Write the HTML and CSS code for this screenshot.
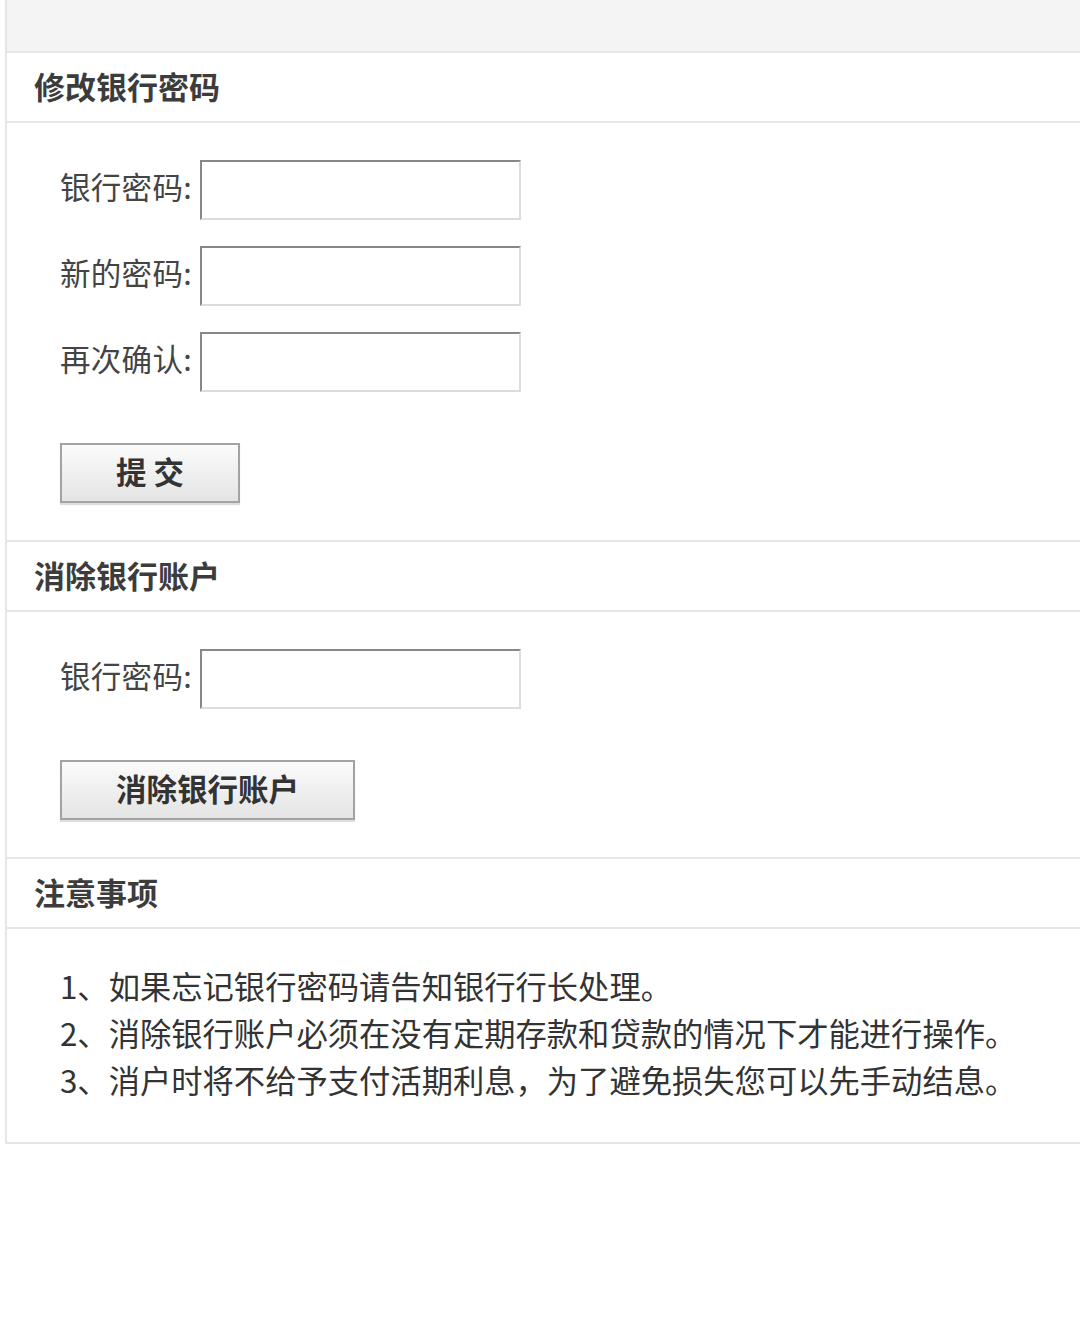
FILE: index.html
```html
<!DOCTYPE html>
<html lang="zh-CN">
<head>
<meta charset="utf-8">
<title>银行密码</title>
<link rel="stylesheet" href="styles.css">
</head>
<body>
<div class="panel">
  <div class="topband"></div>

  <div class="sec-head">修改银行密码</div>
  <div class="sec-body">
    <div class="row"><span class="lbl">银行密码:</span><input class="inp" type="password"></div>
    <div class="row"><span class="lbl">新的密码:</span><input class="inp" type="password"></div>
    <div class="row"><span class="lbl">再次确认:</span><input class="inp" type="password"></div>
    <div class="btn-row"><button class="btn">提 交</button></div>
  </div>

  <div class="sec-head">消除银行账户</div>
  <div class="sec-body">
    <div class="row"><span class="lbl">银行密码:</span><input class="inp" type="password"></div>
    <div class="btn-row"><button class="btn">消除银行账户</button></div>
  </div>

  <div class="sec-head">注意事项</div>
  <div class="sec-body notes">
    <div class="note">1、如果忘记银行密码请告知银行行长处理。</div>
    <div class="note">2、消除银行账户必须在没有定期存款和贷款的情况下才能进行操作。</div>
    <div class="note">3、消户时将不给予支付活期利息，为了避免损失您可以先手动结息。</div>
  </div>
</div>
</body>
</html>
```

FILE: styles.css
```css
html, body {
  margin: 0;
  padding: 0;
  background: #ffffff;
  overflow: hidden;
}
body {
  font-family: "Noto Sans CJK SC", "Noto Sans", sans-serif;
  color: #333;
}
.panel {
  margin-left: 5px;
  border-left: 2px solid #e6e6e6;
  border-bottom: 2px solid #e6e6e6;
  background: #fff;
}
.topband {
  height: 51px;
  background: #f4f4f4;
}
.sec-head {
  box-sizing: border-box;
  border-top: 2px solid #e6e6e6;
  border-bottom: 2px solid #e6e6e6;
  height: 72px;
  display: flex;
  align-items: center;
  padding: 0 0 4px 27px;
  font-size: 31px;
  font-weight: bold;
  color: #3c3c3c;
}
.sec-body {
  padding: 37px 0 37px 53px;
  display: flex;
  flex-direction: column;
  gap: 26px;
}
.row {
  display: flex;
  align-items: center;
  height: 60px;
}
.lbl {
  box-sizing: border-box;
  font-size: 30.5px;
  color: #444;
  width: 140px;
  line-height: 52px;
  padding-bottom: 8px;
  letter-spacing: 0.3px;
}
.inp {
  box-sizing: border-box;
  width: 321px;
  height: 60px;
  margin: 0;
  border: 2px solid;
  border-color: #878787 #dcdcdc #dcdcdc #878787;
  background: #fff;
  outline: none;
}
.btn-row {
  margin-top: 25px;
  display: flex;
}
.btn {
  box-sizing: border-box;
  height: 60px;
  padding: 0 54px 3px;
  border: 2px solid #a3a3a3;
  background: linear-gradient(#fbfbfb, #e4e4e4);
  box-shadow: 0 2px 1px #dedede;
  font-family: "Noto Sans CJK SC", "Noto Sans", sans-serif;
  font-size: 30.5px;
  font-weight: bold;
  color: #333;
  line-height: 53px;
}
.notes {
  gap: 0;
  padding: 35px 0 37px 53px;
}
.note {
  font-size: 31.3px;
  line-height: 47px;
  color: #333;
  white-space: nowrap;
  position: relative;
  top: -2px;
}
```
